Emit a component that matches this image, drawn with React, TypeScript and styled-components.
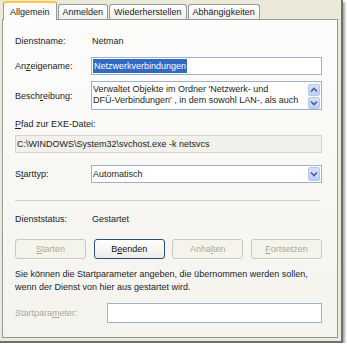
import React from "react";
import styled, { createGlobalStyle, css } from "styled-components";

const Global = createGlobalStyle`
  html, body { margin: 0; padding: 0; background: #ffffff; }
  body { font-family: "Liberation Sans", Arial, sans-serif; font-size: 9px; color: #1c1c1c; }
  * { box-sizing: border-box; }
`;

const Window = styled.div`
  width: 343px;
  height: 343px;
  background: #ece9d8;
  border-right: 2px solid #6f6f6f;
  border-bottom: 2px solid #6f6f6f;
  box-shadow: 2px 2px 2px rgba(0, 0, 0, 0.35);
  display: flex;
  flex-direction: column;
  padding: 1px 3px 3px 2px;
`;

const TabStrip = styled.div`
  display: flex;
  align-items: flex-end;
  height: 18px;
  padding-left: 1px;
  gap: 1px;
  position: relative;
  z-index: 1;
`;

const Tab = styled.div<{ $active?: boolean }>`
  height: 15px;
  padding: 0 4px;
  display: flex;
  align-items: center;
  border: 1px solid #919b9c;
  border-bottom: none;
  border-radius: 3px 3px 0 0;
  background: linear-gradient(#ffffff, #f0efea);
  white-space: nowrap;
  ${(p) =>
    p.$active &&
    css`
      height: 19px;
      margin-bottom: -1px;
      padding: 0 6px;
      background: #fbfbf9;
      border-top: 2px solid #ffc83c;
    `}
`;

const Panel = styled.div`
  flex: 1;
  border: 1px solid #919b9c;
  background: linear-gradient(#fcfcfb, #f4f3ee);
  padding: 0 15px 0 12px;
  display: flex;
  flex-direction: column;
`;

const Row = styled.div<{ $top: number; $h: number }>`
  margin-top: ${(p) => p.$top}px;
  height: ${(p) => p.$h}px;
  display: flex;
  align-items: center;
`;

const Label = styled.div<{ $w?: number; $disabled?: boolean }>`
  width: ${(p) => p.$w ?? 76}px;
  flex: none;
  color: ${(p) => (p.$disabled ? "#aca899" : "#222")};
  white-space: nowrap;
`;

const Value = styled.div`
  padding-left: 1px;
  white-space: nowrap;
`;

const Field = styled.div<{ $ro?: boolean }>`
  flex: 1;
  align-self: stretch;
  border: 1px solid ${(p) => (p.$ro ? "#d6d4c9" : "#9fb1c8")};
  background: ${(p) => (p.$ro ? "#f1f0eb" : "#ffffff")};
  display: flex;
  align-items: center;
  padding-left: 1px;
  position: relative;
  white-space: nowrap;
  overflow: hidden;
`;

const Selected = styled.span`
  background: #316ac5;
  color: #ffffff;
  padding: 1px 1px;
  line-height: 12px;
`;

const Memo = styled.div`
  flex: 1;
  align-self: stretch;
  border: 1px solid #9fb1c8;
  background: #ffffff;
  display: flex;
  padding: 2px 1px 0 1px;
`;

const MemoText = styled.div`
  flex: 1;
  line-height: 11px;
  white-space: nowrap;
  overflow: hidden;
`;

const ScrollCol = styled.div`
  display: flex;
  flex-direction: column;
  gap: 1px;
  width: 12px;
  margin-top: 0;
`;

const ArrowBtn = styled.div<{ $h?: number }>`
  width: 12px;
  height: ${(p) => p.$h ?? 12}px;
  border-radius: 2px;
  background: linear-gradient(#d4e1fd, #bccffb);
  border: 1px solid #b4c7f3;
  display: flex;
  align-items: center;
  justify-content: center;
`;

const ComboBtn = styled(ArrowBtn)`
  position: absolute;
  right: 1px;
  top: 1px;
  height: 14px;
`;

const Separator = styled.div`
  margin-top: 17px;
  height: 1px;
  background: #d2d0c4;
  margin-right: 2px;
`;

const Buttons = styled.div`
  margin-top: 14px;
  height: 20px;
  display: flex;
  justify-content: space-between;
`;

const Button = styled.div<{ $disabled?: boolean }>`
  width: 71px;
  height: 20px;
  border-radius: 3px;
  display: flex;
  align-items: center;
  justify-content: center;
  ${(p) =>
    p.$disabled
      ? css`
          border: 1px solid #cac8bb;
          color: #aca899;
          background: #f5f4ea;
        `
      : css`
          border: 1px solid #2a4d7a;
          color: #111;
          background: linear-gradient(#ffffff, #ecebe6);
        `}
`;

const Info = styled.div`
  margin-top: 9px;
  line-height: 13px;
`;

const Plain = styled.div`
  line-height: 12px;
`;

const U = styled.span`
  text-decoration: underline;
`;

const Up = () => (
  <svg width="8" height="6" viewBox="0 0 8 6">
    <path d="M1 4.5 L4 1.5 L7 4.5" fill="none" stroke="#4d6185" strokeWidth="1.6" />
  </svg>
);
const Down = () => (
  <svg width="8" height="6" viewBox="0 0 8 6">
    <path d="M1 1.5 L4 4.5 L7 1.5" fill="none" stroke="#4d6185" strokeWidth="1.6" />
  </svg>
);

export default function App() {
  return (
    <>
      <Global />
      <Window>
        <TabStrip>
          <Tab $active>Allgemein</Tab>
          <Tab>Anmelden</Tab>
          <Tab>Wiederherstellen</Tab>
          <Tab>Abhängigkeiten</Tab>
        </TabStrip>
        <Panel>
          <Row $top={14} $h={13}>
            <Label>Dienstname:</Label>
            <Value>Netman</Value>
          </Row>
          <Row $top={10} $h={18}>
            <Label>
              An<U>z</U>eigename:
            </Label>
            <Field>
              <Selected>Netzwerkverbindungen</Selected>
            </Field>
          </Row>
          <Row $top={6} $h={29}>
            <Label style={{ alignSelf: "center" }}>
              Besch<U>r</U>eibung:
            </Label>
            <Memo>
              <MemoText>
                Verwaltet Objekte im Ordner 'Netzwerk- und
                <br />
                DFÜ-Verbindungen' , in dem sowohl LAN-, als auch
              </MemoText>
              <ScrollCol>
                <ArrowBtn>
                  <Up />
                </ArrowBtn>
                <ArrowBtn>
                  <Down />
                </ArrowBtn>
              </ScrollCol>
            </Memo>
          </Row>
          <Row $top={8} $h={12}>
            <Plain>
              <U>P</U>fad zur EXE-Datei:
            </Plain>
          </Row>
          <Row $top={5} $h={18}>
            <Field $ro>C:\WINDOWS\System32\svchost.exe -k netsvcs</Field>
          </Row>
          <Row $top={12} $h={18}>
            <Label>
              S<U>t</U>arttyp:
            </Label>
            <Field>
              Automatisch
              <ComboBtn>
                <Down />
              </ComboBtn>
            </Field>
          </Row>
          <Separator />
          <Row $top={11} $h={13}>
            <Label>Dienststatus:</Label>
            <Value>Gestartet</Value>
          </Row>
          <Buttons>
            <Button $disabled>
              <U>S</U>tarten
            </Button>
            <Button>
              B<U>e</U>enden
            </Button>
            <Button $disabled>
              Anha<U>l</U>ten
            </Button>
            <Button $disabled>
              <U>F</U>ortsetzen
            </Button>
          </Buttons>
          <Info>
            Sie können die Startparameter angeben, die übernommen werden sollen,
            <br />
            wenn der Dienst von hier aus gestartet wird.
          </Info>
          <Row $top={9} $h={20}>
            <Label $w={92} $disabled>
              Startpara<U>m</U>eter:
            </Label>
            <Field />
          </Row>
        </Panel>
      </Window>
    </>
  );
}
